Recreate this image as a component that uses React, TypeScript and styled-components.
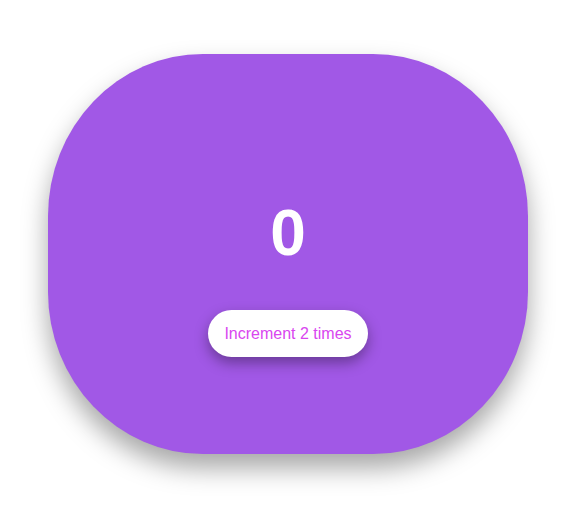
import React, { useState } from "react";
import styled, { createGlobalStyle } from "styled-components";

const Global = createGlobalStyle`
  html, body {
    margin: 0;
    padding: 0;
    background: #ffffff;
    font-family: "Liberation Sans", Arial, sans-serif;
  }
`;

const Page = styled.div`
  display: flex;
  justify-content: center;
  padding: 54px 1px 60px 0;
`;

const Card = styled.div`
  width: 480px;
  height: 400px;
  box-sizing: border-box;
  padding-top: 142px;
  background: #a158e6;
  border-radius: 155px / 162px;
  box-shadow: 0 14px 26px rgba(0, 0, 0, 0.35);
  display: flex;
  flex-direction: column;
  align-items: center;
`;

const Count = styled.div`
  color: #ffffff;
  font-size: 64px;
  font-weight: 700;
  line-height: normal;
`;

const Button = styled.button`
  margin-top: 40px;
  width: 160px;
  height: 47px;
  border: none;
  border-radius: 24px;
  background: #ffffff;
  color: #d946ef;
  font-family: "Liberation Sans", Arial, sans-serif;
  font-size: 16px;
  cursor: pointer;
  box-shadow: 0 6px 14px rgba(0, 0, 0, 0.35);
  padding: 0;
`;

export default function App() {
  const [count, setCount] = useState(0);
  return (
    <>
      <Global />
      <Page>
        <Card>
          <Count>{count}</Count>
          <Button onClick={() => setCount((c) => c + 2)}>Increment 2 times</Button>
        </Card>
      </Page>
    </>
  );
}
